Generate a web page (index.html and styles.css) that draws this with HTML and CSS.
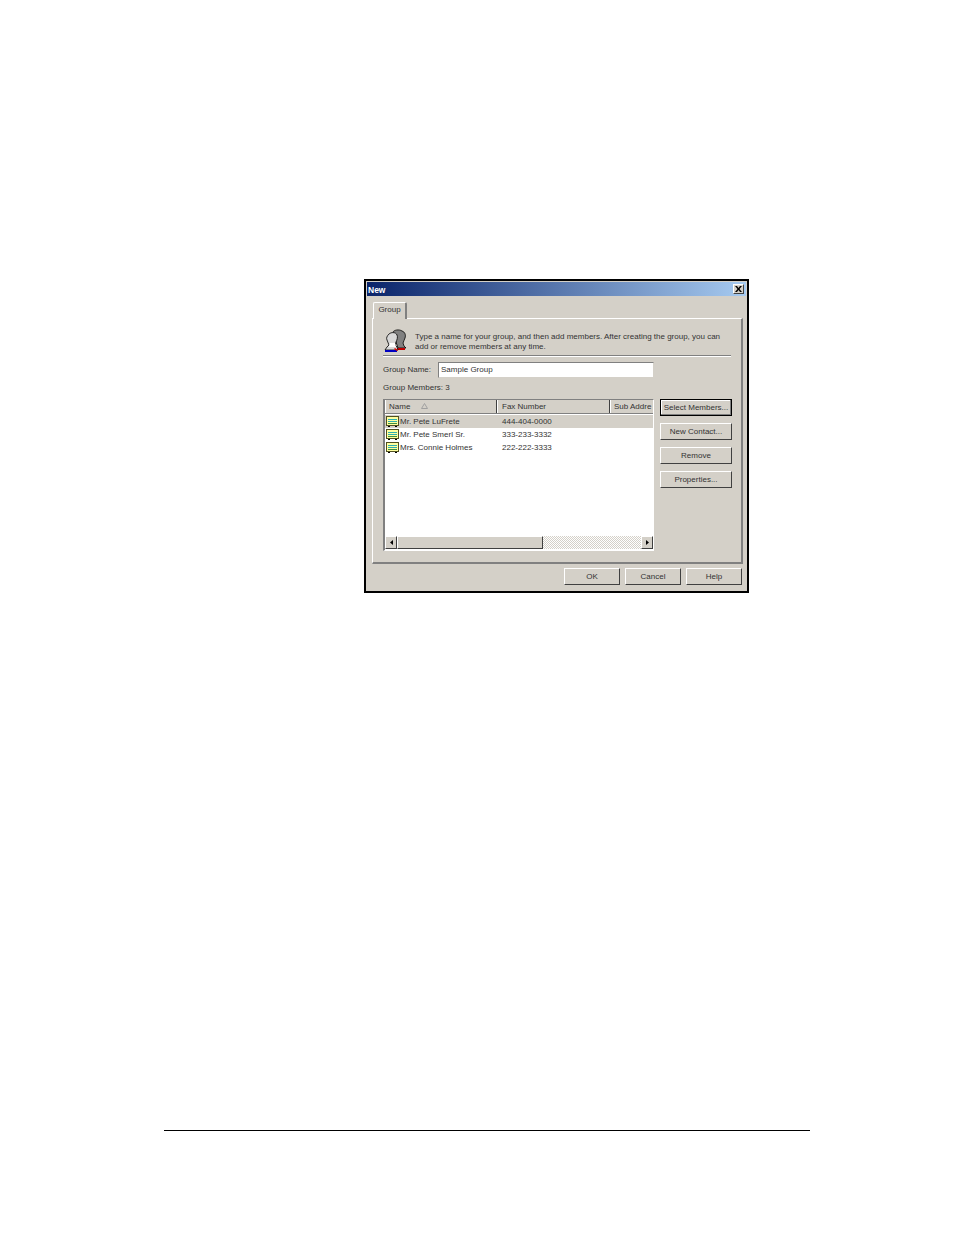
FILE: index.html
```html
<!DOCTYPE html>
<html lang="en">
<head>
<meta charset="utf-8">
<title>New Group</title>
<link rel="stylesheet" href="styles.css">
</head>
<body>
<main class="page">
  <section class="dialog">
    <header class="titlebar">
      <span class="title">New</span>
      <span class="close"><svg width="7" height="6" viewBox="0 0 7 6"><path d="M0 0h2l1.500 2L5 0h2L4.500 3 7 6H5L3.500 4 2 6H0l2.500-3z" fill="#000"/></svg></span>
    </header>
    <div class="tabs"><span class="tab">Group</span></div>
    <div class="panel">
      <div class="intro">
        <svg class="people" width="24" height="24" viewBox="0 0 24 24">
          <path d="M9 3c1-2 6-3 9-1 3 1 4 4 3 7-1 2-1 3-2 5l1 3 2 2H14L11 10z" fill="#808080" stroke="#000" stroke-width=".8"/>
          <path d="M13 19h8v2h-8z" fill="#c00000"/>
          <path d="M5 5c2-2 7-2 8 1 1 2 0 5-1 7l-1 3 2 2 1 3H1l2-3 2-2-2-5c-1-2 0-4 2-6z" fill="#d8d8d8" stroke="#000" stroke-width=".8"/>
          <path d="M6 14h5l1 4H5z" fill="#fff"/>
          <path d="M1 21h12v2H1z" fill="#0000c0"/>
          <path d="M11 19l3 2-1 1-3-2z" fill="#e00000"/>
        </svg>
        <p class="intro-text">Type a name for your group, and then add members. After creating the group, you can<br>add or remove members at any time.</p>
      </div>
      <hr class="divider">
      <div class="name-row">
        <label class="label" for="group-name">Group Name:</label>
        <input class="name-input" id="group-name" value="Sample Group">
      </div>
      <div class="label members-count">Group Members: 3</div>
      <div class="members">
        <div class="list">
          <div class="list-head">
            <span class="col col-name">Name<svg class="sort" width="7" height="6" viewBox="0 0 7 6"><path d="M3.500 .5L6.500 5.500H.5z" fill="none" stroke="#a0a0a0"/></svg></span>
            <span class="col col-fax">Fax Number</span>
            <span class="col col-sub">Sub Addre</span>
          </div>
          <div class="rows">
            <div class="row selected">
              <svg class="card" width="13" height="11" viewBox="0 0 13 11"><rect x=".5" y=".5" width="12" height="9" fill="#ffffa0" stroke="#505020"/><path d="M2 3.500h9M2 5.500h9" stroke="#30b0b0"/><path d="M2 7.500h9" stroke="#409040"/><path d="M2 10.500h2M9 10.500h2" stroke="#000"/></svg>
              <span class="cell-name">Mr. Pete LuFrete</span><span class="cell-fax">444-404-0000</span>
            </div>
            <div class="row">
              <svg class="card" width="13" height="11" viewBox="0 0 13 11"><rect x=".5" y=".5" width="12" height="9" fill="#ffffa0" stroke="#505020"/><path d="M2 3.500h9M2 5.500h9" stroke="#30b0b0"/><path d="M2 7.500h9" stroke="#409040"/><path d="M2 10.500h2M9 10.500h2" stroke="#000"/></svg>
              <span class="cell-name">Mr. Pete Smerl Sr.</span><span class="cell-fax">333-233-3332</span>
            </div>
            <div class="row">
              <svg class="card" width="13" height="11" viewBox="0 0 13 11"><rect x=".5" y=".5" width="12" height="9" fill="#ffffa0" stroke="#505020"/><path d="M2 3.500h9M2 5.500h9" stroke="#30b0b0"/><path d="M2 7.500h9" stroke="#409040"/><path d="M2 10.500h2M9 10.500h2" stroke="#000"/></svg>
              <span class="cell-name">Mrs. Connie Holmes</span><span class="cell-fax">222-222-3333</span>
            </div>
          </div>
          <div class="hscroll">
            <span class="arrow"><svg width="3" height="5" viewBox="0 0 3 5"><path d="M3 0v5L0 2.500z" fill="#000"/></svg></span>
            <span class="thumb"></span>
            <span class="track"></span>
            <span class="arrow"><svg width="3" height="5" viewBox="0 0 3 5"><path d="M0 0v5l3-2.500z" fill="#000"/></svg></span>
          </div>
        </div>
        <div class="side-buttons">
          <button class="btn btn-default">Select Members...</button>
          <button class="btn">New Contact...</button>
          <button class="btn">Remove</button>
          <button class="btn">Properties...</button>
        </div>
      </div>
    </div>
    <footer class="actions">
      <button class="btn btn-action">OK</button>
      <button class="btn btn-action">Cancel</button>
      <button class="btn btn-action">Help</button>
    </footer>
  </section>
  <hr class="page-rule">
</main>
</body>
</html>
```
FILE: styles.css
```css
* { box-sizing: border-box; }
html, body { margin: 0; padding: 0; background: #fff; }
body { font-family: "Liberation Sans", Arial, sans-serif; font-size: 8px; color: #333; }
.page { width: 954px; height: 1235px; padding-top: 279px; overflow: hidden; }

.dialog {
  width: 385px; height: 314px; margin-left: 364px;
  background: #d4d0c8; border: 2px solid #000; padding: 1px 1px 0;
  display: flex; flex-direction: column;
}
.titlebar {
  height: 14px; flex: none; display: flex; align-items: center; justify-content: space-between;
  padding: 0 2px 0 1px;
  background: linear-gradient(90deg, #0a246a, #a6caf0);
}
.title { color: #fff; font-weight: 700; font-size: 8.5px; position: relative; top: 1px; }
.close {
  width: 11px; height: 10px; background: #d4d0c8; display: flex; align-items: center; justify-content: center;
  border: 1px solid; border-color: #fff #404040 #404040 #fff;
}
.tabs { height: 22px; flex: none; padding: 6px 0 0 6px; }
.tab {
  display: block; width: 34px; height: 17px; position: relative; z-index: 1;
  background: #d4d0c8; text-align: center; line-height: 14px;
  border: 1px solid #fff; border-bottom: 0; border-right: 2px solid #808080; border-radius: 2px 2px 0 0;
}
.panel {
  width: 371px; height: 246px; flex: none; margin-left: 5px;
  border: 1px solid #fff; border-right: 2px solid #808080; border-bottom: 2px solid #808080;
  padding: 9px 10px 0 10px;
}
.intro { display: flex; height: 27px; }
.people { margin: 1px 0 0 1px; flex: none; }
.intro-text { margin: 4px 0 0 7px; font-size: 8px; line-height: 9.500px; white-space: nowrap; }
.divider { margin: 0; height: 2px; width: 348px; border: 0; border-top: 1px solid #808080; border-bottom: 1px solid #fff; }
.name-row { display: flex; align-items: center; margin-top: 5px; height: 15px; }
.label { font-size: 8px; white-space: nowrap; }
.name-input {
  width: 216px; height: 16px; margin-left: 7px; padding: 0 2px; background: #fff; color: #333;
  font: 8px "Liberation Sans", Arial, sans-serif;
  border: 1px solid; border-color: #808080 #d4d0c8 #d4d0c8 #808080; outline: 0;
}
.members-count { margin-top: 6px; height: 10px; line-height: 10px; }
.members { display: flex; margin-top: 6px; }
.list {
  width: 271px; height: 152px; background: #fff; flex: none;
  border: 1px solid; border-color: #808080 #fff #fff #808080; border-left-width: 2px; border-top-width: 1px;
  display: flex; flex-direction: column;
}
.list-head { display: flex; height: 14px; flex: none; background: #d4d0c8; border-bottom: 1px solid #808080; }
.col { line-height: 14px; padding-left: 4px; border-right: 1px solid #404040; border-left: 1px solid #fff; white-space: nowrap; overflow: hidden; }
.col-name { width: 112px; padding-left: 3px; }
.col-fax { width: 113px; }
.col-sub { flex: 1; border-right: 0; padding-left: 3px; }
.sort { margin-left: 11px; }
.rows { flex: 1; padding-top: 1px; }
.row { display: flex; align-items: center; height: 13px; padding-left: 1px; }
.row.selected { background: #d4d0c8; }
.card { flex: none; }
.cell-name { width: 102px; margin-left: 1px; white-space: nowrap; }
.cell-fax { white-space: nowrap; }
.hscroll { display: flex; height: 13px; flex: none; margin-bottom: 1px; }
.arrow {
  width: 12px; flex: none; background: #d4d0c8; display: flex; align-items: center; justify-content: center;
  border: 1px solid; border-color: #fff #404040 #404040 #fff;
}
.thumb { width: 146px; background: #d4d0c8; border: 1px solid; border-color: #fff #404040 #404040 #fff; }
.track { flex: 1; background: repeating-conic-gradient(#d4d0c8 0 25%, #fff 0 50%) 0 0 / 2px 2px; }
.side-buttons { display: flex; flex-direction: column; gap: 7px; margin-left: 6px; flex: none; }
.btn {
  width: 72px; height: 17px; padding: 0; background: #d4d0c8; color: #333;
  font: 8px "Liberation Sans", Arial, sans-serif; white-space: nowrap;
  border: 1px solid; border-color: #fff #404040 #404040 #fff;
}
.btn-default { outline: 1px solid #000; outline-offset: -1px; border-color: #000; box-shadow: inset -1px -1px 0 #808080, inset 1px 1px 0 #fff; }
.actions { display: flex; justify-content: flex-end; gap: 5px; padding: 4px 4px 0 0; }
.btn-action { width: 56px; }
.page-rule { margin: 537px 0 0 164px; width: 646px; height: 1px; border: 0; background: #000; }
```
